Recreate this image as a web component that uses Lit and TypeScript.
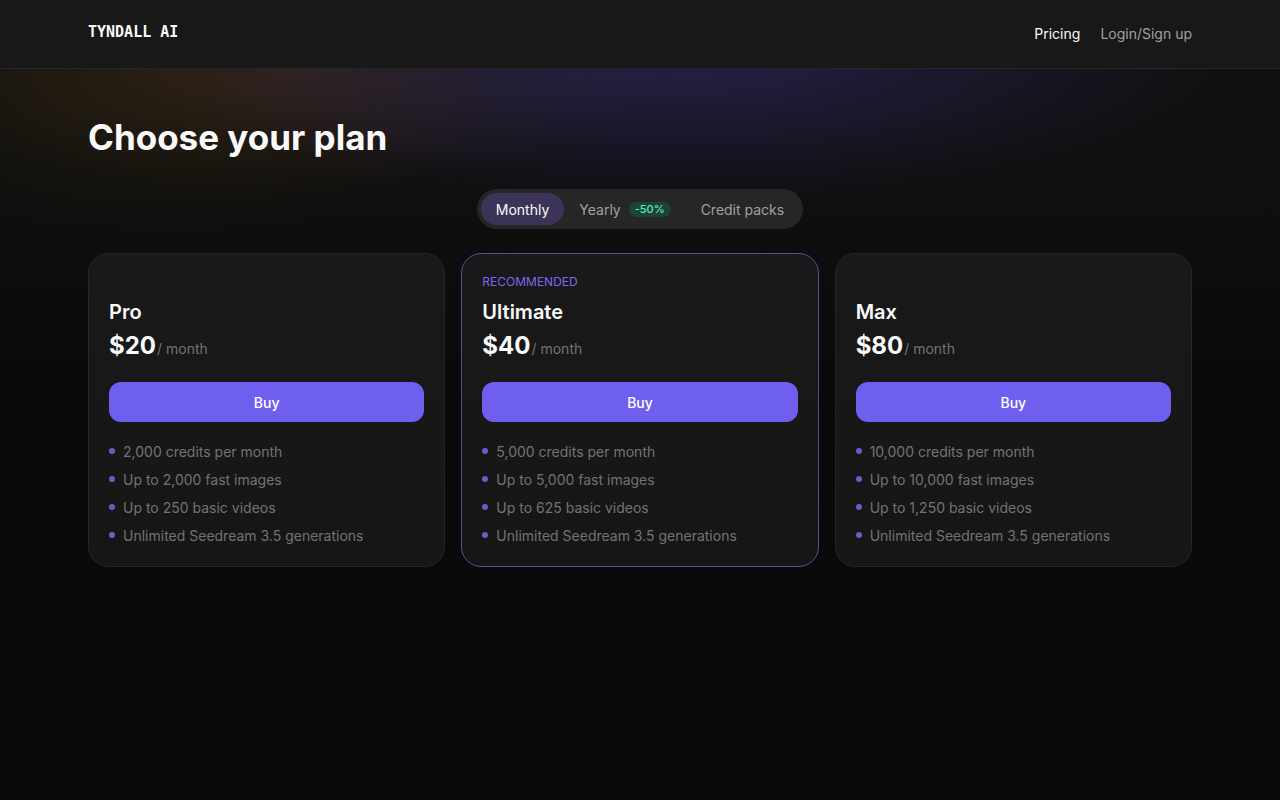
import { LitElement, html, css } from "lit";
import { customElement, state } from "lit/decorators.js";
import { classMap } from "lit/directives/class-map.js";

interface Plan {
  name: string;
  price: string;
  recommended?: boolean;
  features: string[];
}

const PLANS: Plan[] = [
  {
    name: "Pro",
    price: "$20",
    features: ["2,000 credits per month", "Up to 2,000 fast images", "Up to 250 basic videos", "Unlimited Seedream 3.5 generations"],
  },
  {
    name: "Ultimate",
    price: "$40",
    recommended: true,
    features: ["5,000 credits per month", "Up to 5,000 fast images", "Up to 625 basic videos", "Unlimited Seedream 3.5 generations"],
  },
  {
    name: "Max",
    price: "$80",
    features: ["10,000 credits per month", "Up to 10,000 fast images", "Up to 1,250 basic videos", "Unlimited Seedream 3.5 generations"],
  },
];

const TABS = [
  { id: "monthly", label: "Monthly", badge: "" },
  { id: "yearly", label: "Yearly", badge: "-50%" },
  { id: "packs", label: "Credit packs", badge: "" },
];

@customElement("plan-card")
class PlanCard extends LitElement {
  static properties = { plan: { attribute: false } };
  declare plan: Plan;

  static styles = css`
    :host { display: block; }
    * { box-sizing: border-box; }
    .card {
      height: 100%;
      padding: 20px;
      border: 1px solid #262626;
      border-radius: 20px;
      background: linear-gradient(#191919, #161616);
    }
    .card.recommended { border-color: #5a4b9c; }
    .tag {
      height: 16px;
      margin: 0 0 8px;
      font-size: 12px;
      line-height: 16px;
      text-transform: uppercase;
      color: #7b68ee;
    }
    .name { margin: 0 0 4px; font-size: 20px; line-height: 28px; font-weight: 600; color: #fafafa; }
    .price { display: flex; align-items: baseline; gap: 1px; margin: 0 0 20px; }
    .amount { font-size: 24px; line-height: 32px; font-weight: 700; color: #fafafa; }
    .period { font-size: 14px; line-height: 20px; color: #737373; }
    .buy {
      display: block;
      width: 100%;
      height: 40px;
      margin: 0 0 20px;
      padding: 0;
      border: 0;
      border-radius: 12px;
      background: #6f5fee;
      color: #fff;
      font: inherit;
      font-size: 14px;
      font-weight: 500;
      cursor: pointer;
    }
    .features { display: grid; gap: 8px; margin: 0; padding: 0; list-style: none; }
    .feature { display: flex; align-items: flex-start; gap: 8px; font-size: 14px; line-height: 20px; color: #737373; }
    .dot { flex: none; width: 6px; height: 6px; margin-top: 6px; border-radius: 50%; background: #6b5cc8; }
  `;

  render() {
    const { name, price, recommended, features } = this.plan;
    return html`
      <article class=${classMap({ card: true, recommended: !!recommended })}>
        <p class="tag">${recommended ? "Recommended" : ""}</p>
        <h2 class="name">${name}</h2>
        <p class="price"><span class="amount">${price}</span><span class="period">/ month</span></p>
        <button class="buy" type="button">Buy</button>
        <ul class="features">
          ${features.map((f) => html`<li class="feature"><span class="dot"></span><span>${f}</span></li>`)}
        </ul>
      </article>
    `;
  }
}

@customElement("app-root")
class AppRoot extends LitElement {
  @state() private active = "monthly";

  static styles = css`
    :host {
      display: block;
      min-height: 100vh;
      font-family: Inter, "Liberation Sans", sans-serif;
      color: #fafafa;
      background:
        radial-gradient(ellipse 42% 150px at 54% 56px, rgba(66, 54, 150, 0.42), rgba(66, 54, 150, 0.2) 50%, transparent),
        radial-gradient(ellipse 30% 120px at 22% 76px, rgba(90, 56, 40, 0.3), rgba(80, 52, 40, 0.17) 50%, transparent),
        radial-gradient(ellipse 26% 170px at 13% 70px, rgba(60, 44, 0, 0.3), transparent),
        linear-gradient(#111, #0f0f0f 200px, #090909 400px);
      background-color: #090909;
    }
    * { box-sizing: border-box; }
    .header { border-bottom: 1px solid #262626; background: #181818; }
    .container { max-width: 1152px; margin: 0 auto; padding: 0 24px; }
    .bar { display: flex; justify-content: space-between; align-items: center; height: 68px; }
    .brand {
      padding-bottom: 4px;
      font-family: "DejaVu Sans Mono", "Liberation Mono", monospace;
      font-size: 15px;
      line-height: 20px;
      font-weight: 700;
      color: #fafafa;
      text-decoration: none;
    }
    .nav { display: flex; gap: 20px; font-size: 14px; line-height: 20px; }
    .link { color: #a1a1a1; text-decoration: none; }
    .link.current { color: #fafafa; }
    .main { padding-top: 48px; padding-bottom: 48px; }
    .title { margin: 0 0 32px; font-size: 35px; line-height: 40px; font-weight: 700; }
    .tabs {
      display: flex;
      width: fit-content;
      margin: 0 auto 24px;
      padding: 4px;
      border-radius: 20px;
      background: #262626;
    }
    .tab {
      display: flex;
      align-items: center;
      gap: 8px;
      height: 32px;
      padding: 0 15px;
      border: 0;
      border-radius: 16px;
      background: none;
      color: #a1a1a1;
      font: inherit;
      font-size: 14px;
      cursor: pointer;
    }
    .tab.active { background: #3b3458; color: #fafafa; }
    .badge { padding: 0 6px; border-radius: 8px; background: #1b4536; color: #5ee9b5; font-size: 11px; line-height: 15px; font-weight: 500; }
    .plans { display: grid; grid-template-columns: repeat(auto-fit, minmax(280px, 1fr)); gap: 16px; }
  `;

  render() {
    return html`
      <header class="header">
        <div class="container bar">
          <a class="brand" href="#">TYNDALL AI</a>
          <nav class="nav">
            <a class="link current" href="#pricing">Pricing</a>
            <a class="link" href="#login">Login/Sign up</a>
          </nav>
        </div>
      </header>
      <main class="container main">
        <h1 class="title">Choose your plan</h1>
        <div class="tabs" role="tablist">
          ${TABS.map(
            (t) => html`<button
              type="button"
              role="tab"
              aria-selected=${this.active === t.id ? "true" : "false"}
              class=${classMap({ tab: true, active: this.active === t.id })}
              @click=${() => (this.active = t.id)}
            >${t.label}${t.badge ? html`<span class="badge">${t.badge}</span>` : ""}</button>`
          )}
        </div>
        <section class="plans">
          ${PLANS.map((p) => html`<plan-card .plan=${p}></plan-card>`)}
        </section>
      </main>
    `;
  }
}
